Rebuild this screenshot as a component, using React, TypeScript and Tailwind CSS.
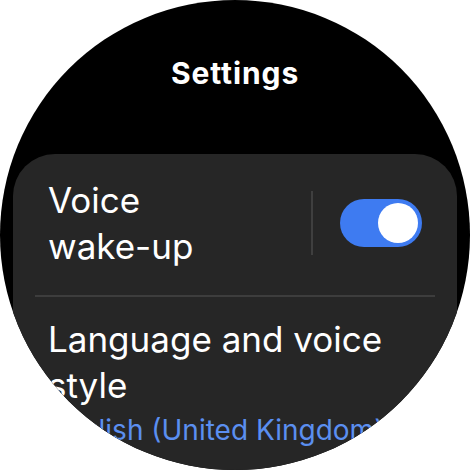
import React from 'react';

const App: React.FC = () => {
  return (
    <div className="w-[470px] h-[470px] bg-white" style={{ fontFamily: 'Inter, "Noto Sans", sans-serif' }}>
      <div className="w-[470px] h-[470px] rounded-full bg-black overflow-hidden flex flex-col">
        {/* Title */}
        <h1 className="pt-[55px] text-center text-white text-[30px] leading-[36px] font-bold tracking-[0.9px]">
          Settings
        </h1>

        {/* Card */}
        <div className="mt-[63px] mx-[13px] rounded-[42px] bg-[#262626] flex-1">
          {/* Voice wake-up row */}
          <div className="flex items-center pl-[35px] pr-[35px] pt-[23px] pb-[26px]">
            <div className="flex-1 text-white text-[35px] leading-[46px]">
              Voice
              <br />
              wake-up
            </div>
            <div className="w-[2px] h-[64px] bg-[#3f3f3f] mr-[27px]" />
            <div className="w-[82px] h-[48px] rounded-full bg-[#3e7bf1] flex items-center justify-end pr-[4px]">
              <div className="w-[40px] h-[40px] rounded-full bg-white" />
            </div>
          </div>

          <div className="mx-[22px] h-[2px] bg-[#3d3d3d]" />

          {/* Language row */}
          <div className="pl-[35px] pr-[20px] pt-[19px]">
            <div className="text-white text-[35px] leading-[46px]">
              Language and voice
              <br />
              style
            </div>
            <div className="mt-[4px] text-[#5b8ff0] text-[28px] leading-[36px] whitespace-nowrap">
              English (United Kingdom)
            </div>
          </div>
        </div>
      </div>
    </div>
  );
};

export default App;
